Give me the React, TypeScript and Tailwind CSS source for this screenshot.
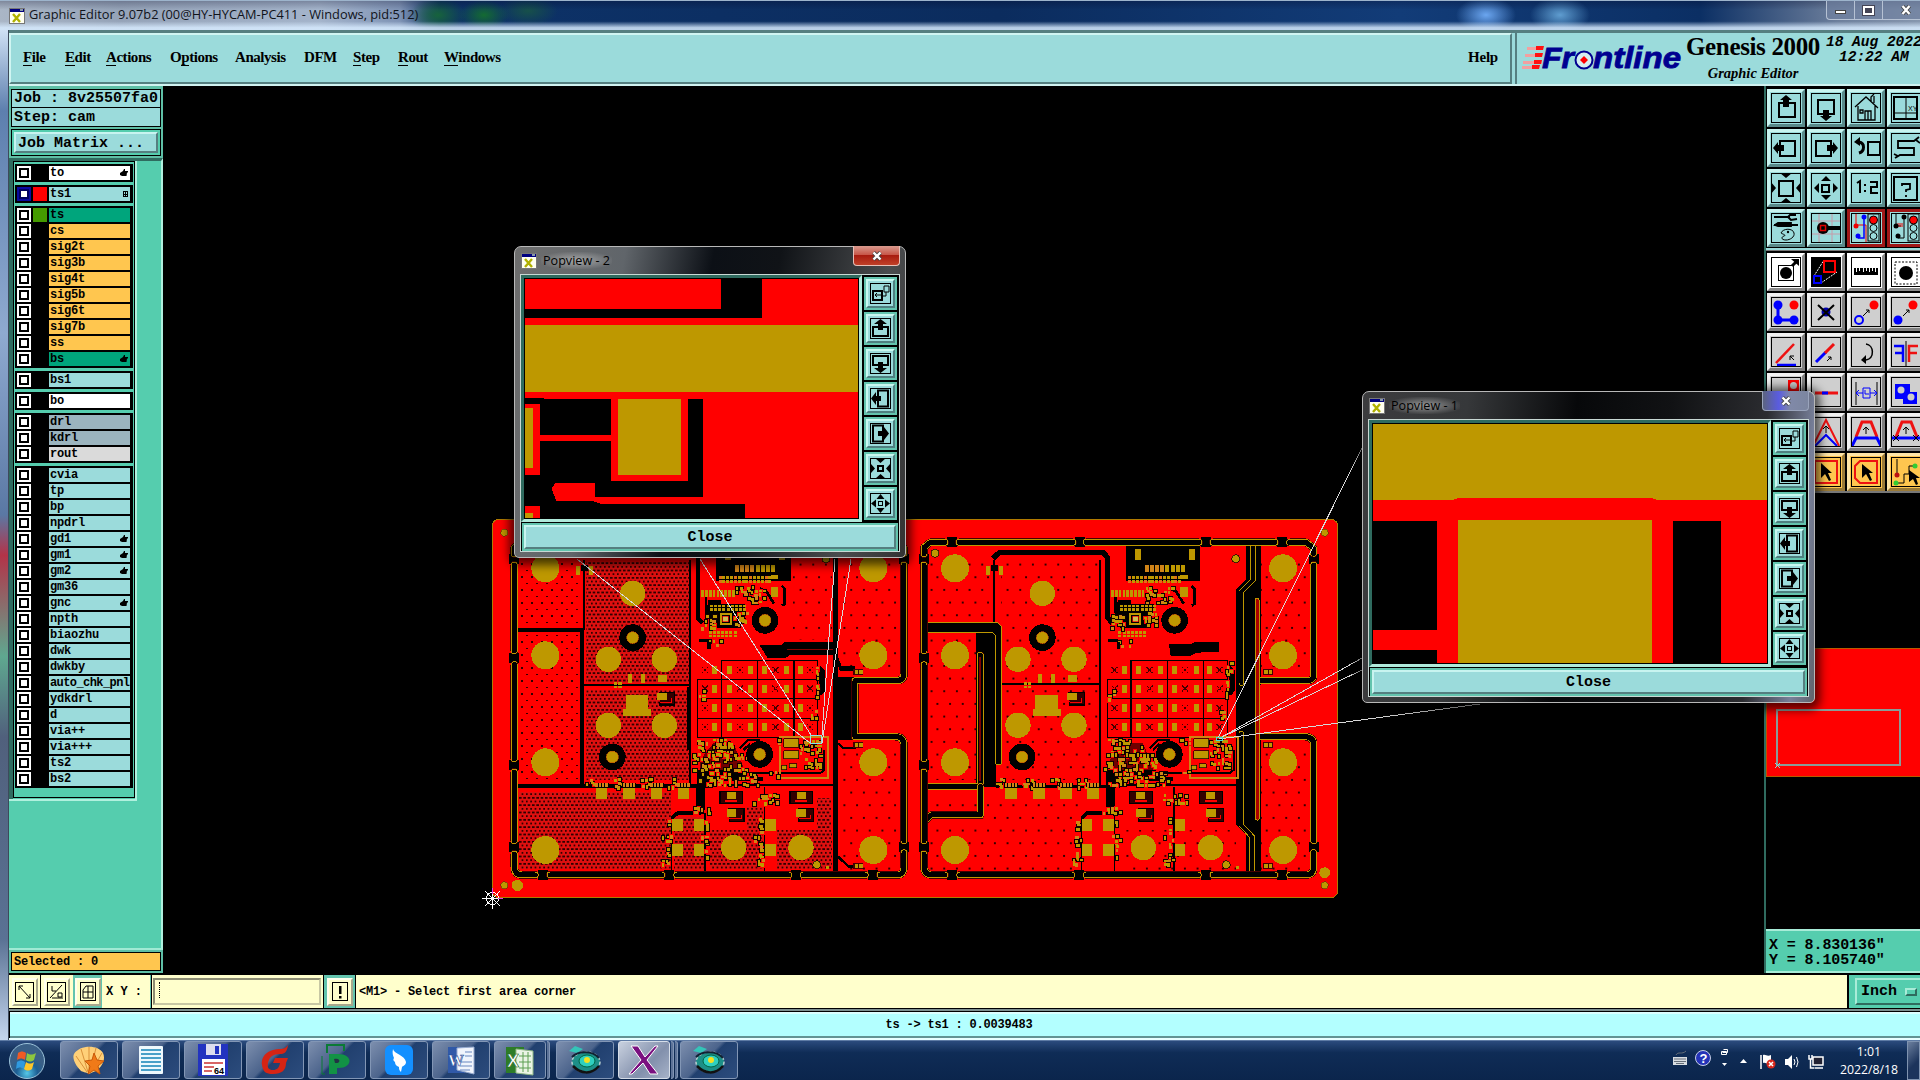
import type { ReactNode } from 'react';

const GOLD = '#be9800';
const RED = '#ff0000';

type Layer = { name: string; bg: string; mark?: 'hand' | 'grid'; color?: string; active?: boolean };

const C = 'bg-[#9bdbdb]';
const G = 'bg-[#00a57c]';
const O = 'bg-[#ffc64f]';

const layerGroups: Layer[][] = [
  [{ name: 'to', bg: 'bg-white', mark: 'hand' }],
  [{ name: 'ts1', bg: C, mark: 'grid', color: 'bg-[#ff0000]', active: true }],
  [
    { name: 'ts', bg: G, color: 'bg-[#459a00]' },
    { name: 'cs', bg: O },
    { name: 'sig2t', bg: O },
    { name: 'sig3b', bg: O },
    { name: 'sig4t', bg: O },
    { name: 'sig5b', bg: O },
    { name: 'sig6t', bg: O },
    { name: 'sig7b', bg: O },
    { name: 'ss', bg: O },
    { name: 'bs', bg: G, mark: 'hand' },
  ],
  [{ name: 'bs1', bg: C }],
  [{ name: 'bo', bg: 'bg-white' }],
  [
    { name: 'drl', bg: 'bg-[#9bb4be]' },
    { name: 'kdrl', bg: 'bg-[#9bb4be]' },
    { name: 'rout', bg: 'bg-[#dadada]' },
  ],
  [
    { name: 'cvia', bg: C },
    { name: 'tp', bg: C },
    { name: 'bp', bg: C },
    { name: 'npdrl', bg: C },
    { name: 'gd1', bg: C, mark: 'hand' },
    { name: 'gm1', bg: C, mark: 'hand' },
    { name: 'gm2', bg: C, mark: 'hand' },
    { name: 'gm36', bg: C },
    { name: 'gnc', bg: C, mark: 'hand' },
    { name: 'npth', bg: C },
    { name: 'biaozhu', bg: C },
    { name: 'dwk', bg: C },
    { name: 'dwkby', bg: C },
    { name: 'auto_chk_pnl', bg: C },
    { name: 'ydkdrl', bg: C },
    { name: 'd', bg: C },
    { name: 'via++', bg: C },
    { name: 'via+++', bg: C },
    { name: 'ts2', bg: C },
    { name: 'bs2', bg: C },
  ],
];

const menus = [
  { text: 'File', key: 0, w: 'w-[42px]' },
  { text: 'Edit', key: 0, w: 'w-[41px]' },
  { text: 'Actions', key: 0, w: 'w-[64px]' },
  { text: 'Options', key: 1, w: 'w-[65px]' },
  { text: 'Analysis', key: -1, w: 'w-[69px]' },
  { text: 'DFM', key: -1, w: 'w-[49px]' },
  { text: 'Step', key: 0, w: 'w-[45px]' },
  { text: 'Rout', key: 0, w: 'w-[46px]' },
  { text: 'Windows', key: 0, w: 'w-[70px]' },
];

const MONO = "font-['Liberation_Mono','DejaVu_Sans_Mono',monospace] font-bold";
const SERIF = "font-['Liberation_Serif',serif] font-bold";
const UI = "font-['Open_Sans','Noto_Sans',sans-serif]";

const TEAL_BEVEL = 'border-2 border-t-[#c8f4f0] border-l-[#c8f4f0] border-b-[#557f80] border-r-[#557f80]';

function XIcon() {
  return (
    <svg width="16" height="16" viewBox="0 0 16 16" shapeRendering="crispEdges">
      <rect x="0.5" y="0.5" width="15" height="15" fill="#fffff0" stroke="#777" />
      <rect x="1" y="1" width="14" height="3" fill="#000080" />
      <rect x="11" y="1" width="3" height="2" fill="#8899aa" />
      <path d="M4 6l7 8M11 6l-7 8" stroke="#b0b000" strokeWidth="2.4" shapeRendering="auto" />
    </svg>
  );
}

function Hand() {
  return (
    <svg width="8" height="8" viewBox="0 0 8 8" className="mr-[2px]">
      <path d="M0 4l3-2 1-2h1v2h3v1.500H7L6.500 7H2L0 6z" fill="#000" />
    </svg>
  );
}

function GridMark() {
  return (
    <svg width="5" height="6" viewBox="0 0 5 6" className="mr-[2px]" shapeRendering="crispEdges">
      <path d="M0.500 0.500h4v5h-4zM2.500 0v6M0 3h5" fill="none" stroke="#000" strokeWidth="1" />
    </svg>
  );
}

function LayerRow({ layer }: { layer: Layer }) {
  const tracking = layer.name.length > 11 ? 'tracking-[-0.58px]' : 'tracking-[-0.2px]';
  return (
    <div className="flex h-[14px] gap-[2px]">
      <div className={`flex h-[14px] w-[14px] items-center justify-center ${layer.active ? 'bg-[#0a0aa0]' : 'bg-white'}`}>
        <div className={`h-[10px] w-[10px] border-2 bg-white ${layer.active ? 'border-[#000060]' : 'border-black'}`} />
      </div>
      <div className={`h-[14px] w-[14px] ${layer.color ?? 'bg-black'}`} />
      <div className={`flex h-[14px] w-[81px] items-center justify-between pl-px ${layer.bg}`}>
        <span className={`${MONO} ${tracking} pt-px text-[12px] leading-[13px] whitespace-nowrap`}>{layer.name}</span>
        {layer.mark === 'hand' && <Hand />}
        {layer.mark === 'grid' && <GridMark />}
      </div>
    </div>
  );
}

function Sidebar() {
  return (
    <div className="flex h-[887px] w-[154px] shrink-0 flex-col bg-[#55cdae]">
      <div className="flex h-[72px] flex-col bg-[#5fbfa6] px-[2px] pt-[3px]">
        <div className={`${MONO} h-[19px] border border-black bg-[#9bdbdb] pl-[2px] text-[15px] leading-[18px] whitespace-nowrap`}>Job : 8v25507fa0</div>
        <div className={`${MONO} -mt-px h-[20px] border border-black bg-[#9bdbdb] pl-[2px] text-[15px] leading-[20px]`}>Step: cam</div>
        <div className="mt-[2px] h-[27px] border border-black bg-[#55cdae] p-[2px]">
          <div className={`${MONO} ${TEAL_BEVEL} h-[21px] bg-[#9bdbdb] pl-[2px] text-[15px] leading-[19px]`}>Job Matrix ...</div>
        </div>
      </div>
      <div className="h-[792px] border-t-[3px] border-r-2 border-b-2 border-t-[#2f6b5f] border-r-[#b0f0de] border-b-[#a0ead4]">
        <div className="flex h-[640px] w-[128px] border-r-2 border-b-2 border-[#b0f0de]">
          <div className="h-[638px] w-[4px] bg-[#2f6b5f]" />
          <div className="flex h-[637px] w-[122px] flex-col gap-[3px] border border-black bg-[#55cdae] px-px pt-[2px]">
            {layerGroups.map((group, i) => (
              <div key={i} className="flex flex-col gap-[2px] border-2 border-black bg-black">
                {group.map((layer) => (
                  <LayerRow key={layer.name} layer={layer} />
                ))}
              </div>
            ))}
          </div>
        </div>
      </div>
      <div className="flex h-[23px] flex-col bg-[#5fbfa6] px-[2px] pt-[2px]">
        <div className={`${MONO} h-[19px] border border-black bg-[#ffc64f] pl-[2px] text-[12px] leading-[18px] tracking-[-0.2px]`}>Selected : 0</div>
      </div>
    </div>
  );
}

/* ---------- toolbar glyphs, all on a 30x30 grid ---------- */

const box = (x: number, y: number, w: number, h: number, sw = 2, c = '#000') => (
  <rect x={x} y={y} width={w} height={h} fill="none" stroke={c} strokeWidth={sw} />
);

const glyphs: Record<string, ReactNode> = {
  up: <>{box(8, 10, 16, 14)}<path d="M12 14V7H9l6-5 6 5h-3v7z" /></>,
  down: <>{box(7, 7, 16, 14)}<path d="M12 17v6H9l6 5 6-5h-3v-6z" /></>,
  home: <><path d="M4 14L15 4l12 11M7 13v14h17V13M20 8V4l3-3M23 10V3M14 27v-9h6v9M9 17h3v3H9zM17 18v9" fill="none" stroke="#000" strokeWidth="1.300" /></>,
  xy: <>{box(3, 4, 23, 22)}<path d="M15 4v22M3 20h23" stroke="#000" fill="none" /><text x="17" y="18" fontSize="7" fontFamily="Liberation Sans">XY</text></>,
  left: <>{box(9, 8, 15, 15)}<path d="M13 12H7V9l-5 6 5 6v-3h6z" /></>,
  right: <>{box(5, 8, 15, 15)}<path d="M16 12h6V9l5 6-5 6v-3h-6z" /></>,
  undo: <>{box(17, 9, 12, 13)}<path d="M8 9c6 1 6 9 0 11" fill="none" stroke="#000" strokeWidth="3" /><path d="M9 4v9L3 9z" /></>,
  serp: <path d="M4 25l5-3h14v-7H7V8h16l5-4M3 21l4 2M25 7l4 3" fill="none" stroke="#000" strokeWidth="1.800" />,
  zin: <>{box(8, 8, 14, 15)}<path d="M9 0h12l-6 5zM9 30h12l-6-5zM0 9l5 6-5 6zM30 9l-5 6 5 6z" /></>,
  zout: <>{box(11, 12, 7, 7)}<path d="M15 3l5 5H10zM15 27l5-5H10zM3 15l5-5v10zM27 15l-5-5v10z" /></>,
  ratio: <path d="M6 10l3-2v12M14 11v2M14 17v2M19 9h7v5h-6v6h7" fill="none" stroke="#000" strokeWidth="2" />,
  help: <>{box(3, 4, 23, 23)}<path d="M11 13v-2h8v5l-4 1v2M15 22v2" fill="none" stroke="#000" strokeWidth="1.800" /></>,
  tools: <><path d="M3 4h16M3 12h24M4 12l3-2h13v3H7z" fill="none" stroke="#000" strokeWidth="1.800" /><path d="M25 2l-6 0-2 2 3 3 6-1" fill="none" stroke="#000" strokeWidth="2" /><path d="M10 20c2-5 12-5 13 0 1 4-4 7-8 7-5 0-5-3-2-4s-2-2-3-3z" fill="none" stroke="#000" /><circle cx="17" cy="19" r="1.200" /></>,
  probe: <><path d="M0 8h30M0 21h30M8 0v30M21 0v30" stroke="#c79aa8" /><circle cx="12" cy="15" r="6" /><path d="M14 15h15" stroke="#000" strokeWidth="4" />{box(9.500, 12.500, 5, 5, 1.500, '#d00')}</>,
  net1: <><path d="M5 0v12h10v17" stroke="#e00" fill="none" /><path d="M13 4v21H7" stroke="#00f" fill="none" strokeWidth="1.500" /><circle cx="5" cy="13" r="2.500" fill="#e00" /><circle cx="13" cy="4" r="2.500" fill="#00f" /><circle cx="7" cy="23" r="2.500" fill="#00f" />{box(17, 1, 11, 27, 1)}<circle cx="22.500" cy="7" r="4" fill="#f00" stroke="#000" /><circle cx="22.500" cy="15" r="3.500" fill="none" stroke="#000" /><circle cx="22.500" cy="23" r="3.500" fill="none" stroke="#000" /></>,
  net2: <><path d="M5 0v13M13 4v21H7M5 13h5" stroke="#000" fill="none" /><path d="M7 10v4M9 10v4M11 10v4" stroke="#e00" /><circle cx="5" cy="13" r="2.500" /><circle cx="13" cy="4" r="2.500" /><circle cx="7" cy="23" r="2.500" />{box(17, 1, 11, 27, 1)}<circle cx="22.500" cy="7" r="4" fill="#f00" stroke="#000" /><circle cx="22.500" cy="15" r="3.500" fill="none" stroke="#000" /><circle cx="22.500" cy="23" r="3.500" fill="none" stroke="#000" /></>,
  featMove: <>{box(7.500, 8.500, 15, 15, 1)}<circle cx="15" cy="16" r="6" /><path d="M21 9l4-4" stroke="#000" strokeWidth="3" /><path d="M20 2h8v7z" /></>,
  area: <><rect width="30" height="30" /><path d="M3 19L13 3M10 26l16-11" stroke="#fff" strokeDasharray="2 1" />{box(13, 4, 11, 11, 2, '#f00')}{box(3, 19, 7, 7, 2, '#00f')}</>,
  ruler: <path d="M3 18h24v-7h-2v4h-1v-4h-2v3h-1v-3h-2v4h-1v-4h-2v3h-1v-3h-2v4h-1v-4H9v3H8v-3H6v4H5v-4H3z" />,
  selBox: <><rect x="4" y="5" width="22" height="22" fill="none" stroke="#000" strokeDasharray="2 1.500" /><circle cx="15" cy="16" r="7" /></>,
  nodes: <><path d="M7 8v15h16" stroke="#00f" fill="none" strokeWidth="3" /><circle cx="7" cy="8" r="4.500" fill="#00f" /><circle cx="7" cy="23" r="4.500" fill="#00f" /><circle cx="23" cy="23" r="4.500" fill="#00f" /><circle cx="23" cy="8" r="4.500" fill="#f00" /></>,
  del: <><circle cx="15" cy="15" r="4.500" fill="#00a" /><path d="M7 8l16 15M23 8L7 23" stroke="#000" strokeWidth="2" /></>,
  copy: <><circle cx="8" cy="23" r="4" fill="none" stroke="#00f" strokeWidth="2" /><circle cx="23" cy="8" r="4.500" fill="#f00" /><path d="M12 19l6-6M15 13h3v3" stroke="#000" fill="none" /></>,
  move: <><circle cx="7" cy="23" r="4.500" fill="#00f" /><circle cx="22" cy="8" r="4.500" fill="#f00" /><path d="M12 19l6-6M15 13h3v3" stroke="#000" fill="none" /></>,
  rotate: <><path d="M5 26L23 7" stroke="#e11" strokeWidth="2.500" /><path d="M6 28h19" stroke="#00f" strokeWidth="2.500" /><path d="M23 23l-4-4M19 23v-4h4" stroke="#000" fill="none" /></>,
  scale: <><path d="M5 25l10-10" stroke="#00f" strokeWidth="3" /><path d="M14 16l9-9" stroke="#e11" strokeWidth="3" /><path d="M16 24l4-4M17 20h3v3" stroke="#000" fill="none" /></>,
  arc: <><path d="M15 7c8 1 9 14 0 16" fill="none" stroke="#000" strokeWidth="1.500" /><path d="M15 18l-5 5 5 4z" /></>,
  mirror: <><path d="M3 9h9v16M4 16h8" stroke="#00f" fill="none" strokeWidth="2.500" /><path d="M27 9h-9v16M26 16h-8" stroke="#e11" fill="none" strokeWidth="2.500" /><path d="M15 4v25" stroke="#000" /></>,
  pad: <><rect x="17" y="3" width="11" height="11" fill="#f00" /><circle cx="22.500" cy="8.500" r="3.500" fill="#ccc" /></>,
  seg: <><path d="M4 16h23" stroke="#e11" strokeWidth="3" /><path d="M11 16h6" stroke="#00f" strokeWidth="3" /></>,
  dist: <><path d="M5 5v23M26 5v23" stroke="#000" /><path d="M6 16h6M19 16h6M8 13l-3 3 3 3M23 13l3 3-3 3M12 11h7v10h-7zM14 13v4h4" stroke="#00f" fill="none" /></>,
  pads: <><rect x="4" y="7" width="15" height="15" fill="#00f" /><rect x="12" y="15" width="14" height="12" fill="#00f" /><circle cx="10" cy="13" r="3.500" fill="#ccc" /><circle cx="20" cy="20" r="3.500" fill="#ccc" /></>,
  peak1: <><path d="M2 29L15 3l13 26" stroke="#e11" fill="none" strokeWidth="2" /><path d="M4 29l11-11 11 11" stroke="#00f" fill="none" strokeWidth="2" /><path d="M15 16v-6M12 12l3-3 3 3" stroke="#000" fill="none" /></>,
  peak2: <><path d="M5 20L11 5h9l6 15" stroke="#e11" fill="none" strokeWidth="3" /><path d="M1 29l4-8h21l4 8" stroke="#00f" fill="none" strokeWidth="3" /><path d="M15 17v-6M12 13l3-3 3 3" stroke="#000" fill="none" /></>,
  peak3: <><path d="M5 20L11 5h9l6 15" stroke="#e11" fill="none" strokeWidth="3" /><path d="M1 21h29" stroke="#00f" strokeWidth="3" /><path d="M15 17v-6M12 13l3-3 3 3M2 18l6 6M8 18l-6 6M22 18l6 6M28 18l-6 6" stroke="#000" fill="none" /></>,
  sel1: <>{box(4, 4, 22, 22, 2, '#e11')}<path d="M10 6v15l4-4 4 7 2-1-3-7h4z" /></>,
  sel2: <><path d="M9 4h17v22H9l-5-5V9z" stroke="#e11" fill="none" strokeWidth="2" /><path d="M11 7v14l4-4 4 7 2-1-3-7h4z" /></>,
  sel3: <><path d="M6 2v16M5 26h8v-9h5V9h6" stroke="#000" fill="none" /><circle cx="6" cy="18" r="2.500" fill="#b11" /><circle cx="5" cy="26" r="2.500" fill="#3c3" /><circle cx="24" cy="9" r="2.500" fill="#3c3" /><path d="M18 13v12l4-3 3 6 2-1-2-6h4z" /></>,
};

const VIEW_TOOLS = ['up', 'down', 'home', 'xy', 'left', 'right', 'undo', 'serp', 'zin', 'zout', 'ratio', 'help', 'tools', 'probe', 'net1', 'net2'];
const EDIT_TOOLS = [
  'featMove', 'area', 'ruler', 'selBox',
  'nodes', 'del', 'copy', 'move',
  'rotate', 'scale', 'arc', 'mirror',
  'pad', 'seg', 'dist', 'pads',
  'sel1', 'peak1', 'peak2', 'peak3',
  'sel1', 'sel1', 'sel2', 'sel3',
];

function toolTone(name: string, index: number, edit: boolean) {
  if (!edit) {
    return name.startsWith('net')
      ? 'bg-[#9bdbdb] border-[#a01818]'
      : 'bg-[#9bdbdb] border-t-[#c8f4f0] border-l-[#c8f4f0] border-b-[#5a8a8a] border-r-[#5a8a8a]';
  }
  if (index < 4) return 'bg-white border-t-white border-l-white border-b-[#8a8a8a] border-r-[#8a8a8a]';
  if (index >= 20) return 'bg-[#ffc64f] border-t-[#ffe6a8] border-l-[#ffe6a8] border-b-[#9a7a38] border-r-[#9a7a38]';
  return 'bg-[#cfcfcf] border-t-[#f2f2f2] border-l-[#f2f2f2] border-b-[#808080] border-r-[#808080]';
}

function ToolButton({ name, index, edit }: { name: string; index: number; edit: boolean }) {
  return (
    <div className={`flex h-[38px] w-[38px] items-center justify-center border-[3px] ${toolTone(name, index, edit)}`}>
      <div className="h-[30px] w-[30px] border border-black">
        <svg width="28" height="28" viewBox="1 1 28 28">{glyphs[name]}</svg>
      </div>
    </div>
  );
}

function RightPanel() {
  return (
    <div className="flex h-[887px] w-[156px] shrink-0 flex-col border-l-2 border-[#2f6b5f] bg-black">
      <div className="grid h-[164px] grid-cols-[repeat(4,38px)] content-start gap-[2px] border-b-2 border-[#9bdbdb] pt-[3px] pl-px">
        {VIEW_TOOLS.map((name, i) => (
          <ToolButton key={i} name={name} index={i} edit={false} />
        ))}
      </div>
      <div className="grid h-[243px] grid-cols-[repeat(4,38px)] content-start gap-[2px] border-t border-b-2 border-[#777] pt-[2px] pl-px">
        {EDIT_TOOLS.map((name, i) => (
          <ToolButton key={i} name={name} index={i} edit />
        ))}
      </div>
      <svg width="154" height="436" viewBox="0 0 154 436" shapeRendering="crispEdges">
        <rect x="0.5" y="155.500" width="160" height="128" fill={RED} stroke="#b85a00" />
        <rect x="11" y="217" width="123" height="55" fill="none" stroke="#8a9c98" strokeWidth="2" />
        <path d="M9 270l5 5M14 270l-5 5" stroke="#8fd6d0" />
      </svg>
      <div className={`${MONO} h-[44px] border-t-2 border-b-2 border-[#a8ecd8] bg-[#55cdae] pt-[7px] pl-[3px] text-[15px] leading-[15px] tracking-[-0.1px] whitespace-pre`}>
        <div>X = 8.830136"</div>
        <div>Y = 8.105740"</div>
      </div>
    </div>
  );
}

/* ---------- board artwork ---------- */

// Deterministic scatter of small pads, one per grid cell at most.
function scatter(seed: number, x: number, y: number, w: number, h: number, n: number) {
  let s = seed;
  const next = () => {
    s = (s * 16807) % 2147483647;
    return s / 2147483647;
  };
  next();
  next();
  const used = new Set<string>();
  const pads: { x: number; y: number; w: number; h: number }[] = [];
  for (let i = 0; i < n; i++) {
    const cx = Math.floor((next() * w) / 11);
    const cy = Math.floor((next() * h) / 11);
    const wide = next() > 0.5;
    const shift = next() > 0.5 ? 3 : 0;
    if (used.has(`${cx},${cy}`)) continue;
    used.add(`${cx},${cy}`);
    pads.push({ x: x + cx * 11 + shift, y: y + cy * 11 + 3 - shift, w: wide ? 10 : 7, h: wide ? 8 : 10 });
  }
  return pads;
}

function Cluster({ seed, x, y, w, h, n }: { seed: number; x: number; y: number; w: number; h: number; n: number }) {
  const pads = scatter(seed, x, y, w, h, n);
  return (
    <g>
      {pads.map((p, i) => (
        <rect key={i} x={p.x - 3} y={p.y - 3} width={p.w + 6} height={p.h + 6} fill={i % 3 ? '#100' : RED} />
      ))}
      {pads.map((p, i) => (
        <rect key={i} x={p.x} y={p.y} width={p.w} height={p.h} fill={i % 5 ? GOLD : '#d08418'} />
      ))}
    </g>
  );
}

const BIG = [[196, 175], [196, 436], [196, 757], [196, 1020], [1180, 175], [1180, 436], [1180, 757], [1180, 1020]];
const MID = [[458, 250], [385, 448], [553, 448], [385, 646], [553, 646], [761, 1013], [963, 1013]];
const RINGS = [[458, 383], [397, 741], [855, 331], [839, 733]];

function Slot({ d }: { d: string }) {
  return (
    <g fill="none" strokeLinecap="round" strokeLinejoin="round">
      <path d={d} stroke="#400" strokeWidth="23" />
      <path d={d} stroke={GOLD} strokeWidth="20" />
      <path d={d} stroke="#000" strokeWidth="15" />
    </g>
  );
}

const OUTLINE = [
  'M103 165V422', 'M103 464V746', 'M103 786V992',
  'M103 1032V1070Q103 1095 128 1095H166',
  'M210 1095H546', 'M590 1095H926', 'M970 1095H1156',
  'M1200 1095H1250Q1272 1095 1272 1070V1028',
  'M103 132V112L122 97H166', 'M208 97H550', 'M590 97H928', 'M970 97H1156', 'M1200 97H1250L1272 115V130',
];

const TABS = [[103, 147], [103, 443], [103, 766], [103, 1012], [188, 1095], [568, 1095], [948, 1095], [1178, 1095], [1272, 1010], [188, 97], [570, 97], [949, 97], [1178, 97], [1272, 148]];

function Parts({ seed }: { seed: number }) {
  const rows = [480, 536, 594, 651];
  return (
    <g>
      {/* connector */}
      <rect x="708" y="108" width="224" height="104" />
      <path d="M735 118h18v32h-18zM897 118h18v32h-18z" fill={GOLD} />
      {Array.from({ length: 8 }, (_, i) => (
        <rect key={i} x={765 + i * 15.500} y="165" width="12" height="21" fill={i > 3 ? GOLD : '#d08418'} />
      ))}
      {Array.from({ length: 14 }, (_, i) => (
        <path key={i} d={`M${716 + i * 11.500} 198h9v9h-9zM${716 + i * 11.500} 210h9v8h-9z`} fill={i % 4 ? GOLD : '#e07018'} />
      ))}
      <path d="M840 235l20 10 22 36 M906 228l8 8v46l-8 5 M678 262v46l30 20h50" fill="none" stroke="#000" strokeWidth="8" />
      <path d="M684 270h40v12h70v22h-10v50H690v-40h-10z" />
      {Array.from({ length: 9 }, (_, i) => (
        <path key={i} d={`M${664 + i * 11.500} 241h8v20h-8zM${690 + i * 12.500} 285h9v7h-9zM${690 + i * 12.500} 295h9v7h-9z`} fill={GOLD} />
      ))}
      {Array.from({ length: 7 }, (_, i) => (
        <path key={i} d={`M${686 + i * 12.500} 363h9v8h-9zM${686 + i * 12.500} 374h9v8h-9z`} fill={GOLD} />
      ))}
      <Cluster seed={seed + 1} x={768} y={228} w={88} h={55} n={30} />
      <Cluster seed={seed + 2} x={664} y={316} w={44} h={44} n={20} />
      <Cluster seed={seed + 3} x={762} y={306} w={44} h={44} n={18} />
      <Cluster seed={seed + 4} x={684} y={390} w={44} h={22} n={8} />
      <path d="M872 196h22v12h-22zM872 232h22v28h-22z" fill={GOLD} />
      <path d="M656 388h30v8h-30zM682 396h10v20h-10z" />
      <rect x="719" y="309" width="36" height="36" fill={GOLD} />
      <rect x="725" y="315" width="24" height="24" fill="#000" />
      <rect x="729" y="319" width="16" height="16" fill="#d0c050" stroke={RED} strokeWidth="2" />

      {/* capacitor bank */}
      <path d="M724 451H1013V682H653V508H1013M653 566H1013M653 625H1013M724 451V682M833 451V682M942 451V682" fill="none" stroke="#000" strokeWidth="4" />
      {rows.map((y) => (
        <g key={y}>
          {[704, 747, 811, 853, 919, 960].map((x) => (
            <rect key={x} x={x - 7} y={y - 12} width="15" height="25" fill={GOLD} />
          ))}
          {[675, 780, 886, 990].map((x) => (
            <path key={x} d={`M${x - 9} ${y - 9}l18 18M${x + 9} ${y - 9}l-18 18`} stroke="#400" strokeWidth="4" strokeDasharray="5 2" />
          ))}
        </g>
      ))}
      <path d="M1020 466l16 16v60l-12 14h-8v-30z" />
      <Cluster seed={seed + 5} x={1008} y={456} w={12} h={110} n={14} />
      <Cluster seed={seed + 6} x={656} y={540} w={22} h={33} n={5} />
      <Cluster seed={seed + 7} x={990} y={600} w={22} h={33} n={5} />

      {/* dense logic area under the bank */}
      <path d="M700 700h60l30 70v40H660v-60z" fill="#700000" />
      <path d="M650 780h150v20h50v14H690v20h-40z" />
      <path d="M780 715l24-24h36M790 720l20-18" fill="none" stroke="#000" strokeWidth="7" />
      <Cluster seed={seed + 8} x={652} y={686} w={110} h={55} n={44} />
      <Cluster seed={seed + 17} x={640} y={730} w={160} h={55} n={68} />
      <Cluster seed={seed + 9} x={655} y={786} w={187} h={44} n={60} />
      <path d="M820 790h200l12-10v-60" fill="none" stroke="#000" strokeWidth="6" />
      <rect x="900" y="681" width="145" height="123" fill="none" stroke="#cf8410" strokeWidth="6" />
      <path d="M912 686h45v26h-45zM912 722h45v24h-45zM905 766h16v14h-16zM928 762h22v12h-22z" fill={GOLD} stroke="#000" strokeWidth="2" />
      <Cluster seed={seed + 10} x={960} y={690} w={66} h={88} n={42} />
      <Cluster seed={seed + 11} x={872} y={684} w={33} h={22} n={5} />
      <Cluster seed={seed + 12} x={870} y={782} w={33} h={12} n={4} />

      {/* driver row */}
      <path d="M320 825h340v8H320z" />
      {[364, 447, 529, 610].map((x, i) => (
        <g key={x}>
          <Cluster seed={seed + 20 + i} x={x - 46} y={804} w={33} h={33} n={9} />
          <rect x={x - 20} y="818" width="42" height="14" />
          <path d={`M${x - 18} 820h7v10h-7zM${x - 8} 820h7v10h-7zM${x + 2} 820h7v10h-7zM${x + 12} 820h7v10h-7z`} fill="#d08418" />
          <rect x={x - 17} y="835" width="35" height="33" fill={GOLD} />
        </g>
      ))}

      {/* lower right blocks */}
      <rect x="648" y="830" width="28" height="70" />
      <path d="M575 1082V925l18-15h82v172M853 830v252" fill="none" stroke="#000" strokeWidth="4" />
      <path d="M575 925l18-16h70" fill="none" stroke="#000" strokeWidth="11" />
      {[[592, 945], [657, 945], [592, 1020], [657, 1020], [871, 945], [871, 1020]].map(([x, y]) => (
        <rect key={`${x}-${y}`} x={x - 16} y={y - 17} width="32" height="34" fill={GOLD} />
      ))}
      <Cluster seed={seed + 30} x={640} y={892} w={55} h={22} n={10} />
      {[[564, 940], [564, 1010], [680, 940], [680, 1005], [842, 930], [842, 1005]].map(([x, y], i) => (
        <Cluster key={i} seed={seed + 31 + i} x={x - 4} y={y - 10} w={11} h={55} n={7} />
      ))}
      <Cluster seed={seed + 40} x={546} y={976} w={33} h={22} n={5} />
      <Cluster seed={seed + 41} x={546} y={1046} w={33} h={22} n={5} />
      <Cluster seed={seed + 42} x={664} y={976} w={33} h={22} n={5} />
      <Cluster seed={seed + 43} x={822} y={976} w={33} h={22} n={6} />
      <Cluster seed={seed + 44} x={822} y={1046} w={33} h={22} n={6} />
      <Cluster seed={seed + 45} x={820} y={852} w={77} h={33} n={20} />
      {[[720, 845], [930, 845]].map(([x, y]) => (
        <g key={x}>
          <path d={`M${x} ${y}h68v36h-68z`} fill="#300" stroke="#000" strokeWidth="4" />
          <rect x={x + 20} y={y + 2} width="27" height="20" fill={GOLD} />
          <rect x={x + 16} y={y + 26} width="36" height="6" fill={RED} />
        </g>
      ))}
      {[[532, 547], [740, 896], [949, 896]].map(([x, y]) => (
        <g key={x}>
          <path d={`M${x + 4} ${y}h48v38h-44v-10`} fill="#300" stroke="#000" strokeWidth="4" />
          <path d={`M${x + 8} ${y + 30}h36v-12`} fill="none" stroke={RED} strokeWidth="3" />
          <rect x={x} y={y + 2} width="29" height="22" fill={GOLD} />
        </g>
      ))}

      {/* relay pads */}
      <path d="M437 555h67v43h9v20h-84v-20h8zM444 492h12v26h-12zM483 492h12v26h-12zM534 495h27v21h-27z" fill={GOLD} />
      <path d="M402 516h10v8h-10zM415 516h10v8h-10zM402 527h10v8h-10zM415 527h10v8h-10zM288 168h13v26h-13zM327 168h13v26h-13z" fill={GOLD} />
      <rect x="304" y="164" width="20" height="18" />

      {BIG.map(([x, y]) => (
        <circle key={`${x}-${y}`} cx={x} cy={y} r="42" fill={GOLD} />
      ))}
      {MID.map(([x, y]) => (
        <circle key={`${x}-${y}`} cx={x} cy={y} r="38" fill={GOLD} />
      ))}
      {RINGS.map(([x, y]) => (
        <g key={`${x}-${y}`}>
          <circle cx={x} cy={y} r="40" fill="#000" />
          <circle cx={x} cy={y} r="18" fill={GOLD} stroke="#c05000" strokeWidth="2" />
        </g>
      ))}
      {[[1010, 1064], [1038, 146], [136, 130]].map(([x, y]) => (
        <circle key={x} cx={x} cy={y} r="12" fill={GOLD} stroke="#000" strokeWidth="2" />
      ))}
      <path d="M1120 478h30v16h-30zM1120 697h30v16h-30zM1120 1060h30v16h-30z" fill="#400" />
      <path d="M1124 480h10v12h-10zM1138 480h10v12h-10zM1124 699h10v12h-10zM1138 699h10v12h-10zM1124 1062h10v12h-10zM1138 1062h10v12h-10zM1038 1068h10v9h-10z" fill={GOLD} />
    </g>
  );
}

function Frame() {
  return (
    <g>
      {TABS.map(([x, y]) => (
        <rect key={`${x}-${y}`} x={x - 15} y={y - 15} width="30" height="30" />
      ))}
      {OUTLINE.map((d) => (
        <Slot key={d} d={d} />
      ))}
    </g>
  );
}

function LeftUnit() {
  return (
    <g transform="translate(480 510) scale(0.33333)">
      <path d="M118 150h180v200H118zM118 372h180v450H118z" fill="url(#mid)" />
      <path d="M318 155h308v365H318zM318 540h308v270H318z" fill="url(#dense)" />
      <path d="M118 845h455v232H118zM583 920h88v160h-88zM800 890h50v190h-50zM690 960h160v118H690zM890 960h166v118H890zM1010 865h44v100h-44z" fill="url(#dense)" />
      <path d="M1090 130h160v350h-160zM1090 700h160v380h-160zM940 150h116v240H940z" fill="url(#sparse)" />
      <path d="M113 361H313M307 361V830M113 829H650" fill="none" stroke="#000" strokeWidth="13" />
      <path d="M312 150V361M313 524H630M630 150V830M640 825H1060" fill="none" stroke="#000" strokeWidth="6" />
      <path d="M653 110V325l15 15" fill="none" stroke="#000" strokeWidth="12" />
      <path d="M627 530V720" stroke="#000" strokeWidth="9" />
      <path d="M838 405h66l10-8h150v14l20 56h40v16h-44l-20-48H930l-14 10h-52z" />
      <path d="M920 418H1060" stroke="#c00" strokeWidth="2" />
      <path d="M1060 140h14v945h-14zM1070 500h56v190h-56z" />
      <path d="M1074 700l14 14h40M1074 1040l32 30h20" fill="none" stroke="#000" strokeWidth="7" />
      <Frame />
      <Slot d="M1272 165V490Q1272 512 1250 512H1125V680H1245Q1272 680 1272 705V992" />
      <path d="M1137 524h160v144h-160z" fill={RED} />
      <Parts seed={137} />
      <circle cx="73" cy="68" r="11" fill={GOLD} stroke="#630" strokeWidth="2" />
      <circle cx="73" cy="1126" r="11" fill={GOLD} stroke="#630" strokeWidth="2" />
      <circle cx="112" cy="1126" r="17" fill={GOLD} />
    </g>
  );
}

function RightUnit() {
  return (
    <g transform="translate(889.670 510) scale(0.33333)">
      <path d="M118 150h180v180H118zM118 380h140v430H118zM335 150h290v365H335zM335 540h290v270H335zM118 880h450v200H118zM700 960h340v120H700z" fill="url(#sparse)" />
      <path d="M1115 130h135v355h-135zM1115 700h135v380h-135z" fill="url(#sparse)" />
      <path d="M310 145l20-18h310l14 16v180l20 22" fill="none" stroke="#000" strokeWidth="16" />
      <path d="M313 150V335M335 523H630M630 150V830M650 825H1040" fill="none" stroke="#000" strokeWidth="5" />
      <path d="M258 370h60v462h-60z" />
      <path d="M108 338h216l11 10v415h-17V376l-8-8H108z" stroke={GOLD} strokeWidth="3" />
      <path d="M258 371h48v300h-48z" />
      <path d="M838 403h66l10-7h75v30l-70 2-16 10h-60z" />
      <path d="M1039 100h76v985h-46v-110l-30-30V240l30-32V100" />
      <Slot d="M272 436V830H110" />
      <Slot d="M272 830V915H125L103 935V985" />
      <path d="M272 440V812" stroke={RED} strokeWidth="6" strokeOpacity="0.5" />
      <path d="M1090 100V210l-35 35V520M1055 670V945l32 35V1085" fill="none" stroke={GOLD} strokeWidth="16" strokeLinecap="round" />
      <path d="M1090 100V210l-35 35V520M1055 670V945l32 35V1085" fill="none" stroke="#000" strokeWidth="11" strokeLinecap="round" />
      <Frame />
      <Slot d="M1272 165V495Q1272 512 1250 512H1112" />
      <Slot d="M1112 680H1245Q1272 680 1272 705V992" />
      <path d="M1103 270V925" stroke={GOLD} strokeWidth="14" strokeLinecap="round" />
      <path d="M1103 270V925" stroke="#a00" strokeWidth="8" strokeLinecap="round" />
      <path d="M1112 524h170v144h-170z" fill={RED} />
      <Parts seed={911} />
      <circle cx="1305" cy="68" r="11" fill={GOLD} stroke="#630" strokeWidth="2" />
      <circle cx="1305" cy="1126" r="11" fill={GOLD} stroke="#630" strokeWidth="2" />
      <circle cx="1305" cy="1088" r="16" fill={GOLD} />
    </g>
  );
}

function Board() {
  return (
    <svg width="1601" height="887" viewBox="163 86 1601 887" className="shrink-0 bg-black" shapeRendering="crispEdges">
      <defs>
        <pattern id="dense" width="13" height="22" patternUnits="userSpaceOnUse">
          <rect width="13" height="22" fill="#df1010" />
          <path d="M1 2h6v5H1zM7.500 13h6v5h-6z" fill="#300000" />
        </pattern>
        <pattern id="mid" width="30" height="39" patternUnits="userSpaceOnUse">
          <path d="M4 4h5v5H4zM19 23h5v5h-5z" fill="#300000" />
        </pattern>
        <pattern id="sparse" width="38" height="76" patternUnits="userSpaceOnUse">
          <path d="M8 8h6v6H8zM27 46h6v6h-6z" fill="#300000" />
        </pattern>
      </defs>
      <rect x="492.500" y="519.500" width="845" height="378" rx="6" fill={RED} stroke="#b07a00" />
      <LeftUnit />
      <RightUnit />
      <g fill="none" stroke="#d8d8d8" strokeWidth="1">
        <path d="M577 559L810 743M700 559L811 735M835 559L828 650L822 735M851 559L822 743" />
        <rect x="810.500" y="735.500" width="11" height="8" stroke="#8fe6e6" />
        <path d="M1218 738L1362 448M1220 738L1362 658M1220 738L1362 670M1219 739L1480 704" />
        <path d="M1216 737h6v3h-6z" stroke="#40e0d0" />
      </g>
      <g stroke="#fff" strokeWidth="1" fill="none">
        <path d="M482 898.500h21M492.500 888v21M485 891l15 15M500 891l-15 15" />
        <circle cx="492.500" cy="898.500" r="6" />
        <path d="M492 888v6M498 898h5" stroke="#e040e0" />
      </g>
    </svg>
  );
}

/* ---------- popview windows ---------- */

const popGlyphs: ReactNode[] = [
  <>{box(3, 8, 9, 9)}<path d="M14 3h5v6h-5zM12 13h4v-4M5 12h6M7 10l-2 2 2 2" fill="none" stroke="#000" /></>,
  <>{box(3, 9, 15, 9)}<path d="M8 12V6H4l6.500-5 6.500 5h-4v6z" /></>,
  <>{box(3, 3, 15, 9)}<path d="M8 9v6H4l6.500 5 6.500-5h-4V9z" /></>,
  <>{box(8, 2.500, 10, 16)}<path d="M11 8H6V4l-5 6.500L6 17v-4h5z" /></>,
  <>{box(3, 2.500, 10, 16)}<path d="M8 8h6V4l5 6.500-5 6.500v-4H8z" /></>,
  <>{box(8, 8, 5, 5)}<path d="M5 0h11l-5.500 5zM5 21h11l-5.500-5zM0 5l5 5.500L0 16zM21 5l-5 5.500 5 5.500z" /></>,
  <>{box(8.500, 8.500, 4, 4, 1)}<path d="M10.500 1l4 5h-8zM10.500 20l4-5h-8zM1 10.500l5-4v8zM20 10.500l-5-4v8z" /></>,
];

type PopviewProps = { title: string; place: string; view: string; bar: string; closeTone: string; children: ReactNode };

function Popview({ title, place, view, bar, closeTone, children }: PopviewProps) {
  return (
    <div className={`absolute flex h-[312px] flex-col rounded-t-[7px] rounded-b-[5px] border border-[#b8b8b8] px-[5px] pb-[5px] shadow-[0_2px_10px_5px_rgba(0,0,0,0.65)] ${place} ${bar}`}>
      <div className="flex h-[27px] shrink-0 items-start">
        <div className="flex grow items-center pt-[5px] pl-px">
          <XIcon />
          <span className={`${UI} ml-[4px] bg-[radial-gradient(ellipse,rgba(200,200,200,0.65),transparent_78%)] px-[2px] text-[12.600px] leading-[17px] text-black`}>{title}</span>
        </div>
        <div className={`-mt-px flex h-[20px] w-[47px] items-center justify-center rounded-b-[4px] border border-t-0 ${closeTone}`}>
          <svg width="12" height="10" viewBox="0 0 12 10"><path d="M2.500 1.500l7 7M9.500 1.500l-7 7" stroke="#444" strokeWidth="4" /><path d="M2.500 1.500l7 7M9.500 1.500l-7 7" stroke="#fff" strokeWidth="2.400" /></svg>
        </div>
      </div>
      <div className="flex grow flex-col border border-[#c8d8d4] bg-black">
        <div className="flex h-[247px] justify-between pr-[2px]">
          <div className={`h-[247px] border-[3px] border-t-[#2f6b5f] border-l-[#2f6b5f] border-b-[#b0eadb] border-r-[#b0eadb] bg-black p-px ${view}`}>
            {children}
          </div>
          <div className="flex flex-col gap-[2px] pt-[2px]">
            {popGlyphs.map((g, i) => (
              <div key={i} className="h-[33px] w-[33px] border-2 border-[#63c4ae]">
                <div className="flex h-[29px] w-[29px] items-center justify-center border-2 border-t-[#c8f8f0] border-l-[#c8f8f0] border-b-[#4f8080] border-r-[#4f8080] bg-[#9bdbdb]">
                  <div className="h-[21px] w-[21px] border border-black">
                    <svg width="19" height="19" viewBox="1 1 19 19">{g}</svg>
                  </div>
                </div>
              </div>
            ))}
          </div>
        </div>
        <div className="mx-px mt-px h-[28px] border-2 border-[#63c4ae]">
          <div className={`${MONO} ${TEAL_BEVEL} h-[24px] bg-[#9bdbdb] text-center text-[15px] leading-[21px]`}>Close</div>
        </div>
      </div>
    </div>
  );
}

/* ---------- chrome ---------- */

function TitleBar() {
  return (
    <div className="flex h-[30px] shrink-0 items-center justify-between border-t border-[#9db4cc] bg-[linear-gradient(180deg,rgba(0,0,30,0.25)_0%,transparent_30%,transparent_70%,rgba(215,235,255,0.85)_92%),radial-gradient(ellipse_28px_18px_at_438px_14px,#17633c,transparent),radial-gradient(ellipse_25px_15px_at_484px_14px,#146b32,transparent),radial-gradient(ellipse_30px_15px_at_528px_10px,#17504a,transparent),radial-gradient(ellipse_30px_18px_at_1486px_14px,#6ba6f0,transparent),radial-gradient(ellipse_30px_18px_at_1560px_14px,#5f9dd0,transparent),linear-gradient(90deg,#aab6c6_0px,#95a3b8_120px,#a4b4cb_320px,#7f93b5_400px,#0d3268_440px,#0b2c5e_1000px,#123c78_1400px,#0b2f64_1700px,#6d7f9c_1840px,#8696ae_1920px)]">
      <div className="flex items-center pl-[9px]">
        <XIcon />
        <span className={`${UI} mb-px ml-[4px] text-[12.800px] text-[#10131a]`}>Graphic Editor 9.07b2 (00@HY-HYCAM-PC411 - Windows, pid:512)</span>
      </div>
      <div className="mb-[10px] flex h-[19px] rounded-bl-[4px] border border-t-0 border-r-0 border-[#b6c2d4] bg-[#6f80a0]/70">
        <div className="flex w-[28px] items-end justify-center border-r border-[#b6c2d4] pb-[5px]"><div className="h-[4px] w-[11px] border border-[#444] bg-white" /></div>
        <div className="flex w-[28px] items-center justify-center border-r border-[#b6c2d4]"><div className="h-[9px] w-[11px] border-2 border-white bg-[#445] outline outline-[#445]" /></div>
        <div className="flex w-[37px] items-center justify-center pl-[8px]">
          <svg width="12" height="10" viewBox="0 0 12 10"><path d="M2.500 1l7 8M9.500 1l-7 8" stroke="#444" strokeWidth="4" /><path d="M2.500 1l7 8M9.500 1l-7 8" stroke="#fff" strokeWidth="2.400" /></svg>
        </div>
      </div>
    </div>
  );
}

function MenuBar() {
  return (
    <div className="flex h-[56px] shrink-0 border-t-[3px] border-b-2 border-t-[#557f80] border-b-[#d0f2f0] bg-[#9bdbdb]">
      <div className={`${SERIF} flex h-[51px] w-[1503px] shrink-0 items-center justify-between border-2 border-t-[#d0f5f2] border-l-[#d0f5f2] border-b-[#557f80] border-r-[#557f80] pb-[3px] pl-[12px] text-[15px]`}>
        <div className="flex">
          {menus.map(({ text, key, w }) => (
            <div key={text} className={`${w} leading-[16px] tracking-[-0.45px]`}>
              {key < 0 ? text : (
                <>
                  {text.slice(0, key)}
                  <span className="border-b border-black">{text[key]}</span>
                  {text.slice(key + 1)}
                </>
              )}
            </div>
          ))}
        </div>
        <div className="mr-[12px] tracking-[-0.2px]">Help</div>
      </div>
      <div className="ml-[3px] flex h-[51px] w-[405px] shrink-0 border-l-2 border-[#557f80] pl-[5px]">
        <svg width="161" height="50" viewBox="0 0 161 50" className="shrink-0">
          <path d="M5 14h15v3H5zM3 21h17v3H3zM1 28h19v3H1zM0 33h17v3H0z" fill="#f2a0a0" />
          <path d="M14 13h8l-1 4h-7zM13 20h8l-1 4h-7zM12 27h8l-1 4h-7zM10 32h8l-1 4h-7z" fill="#ff1010" />
          <text x="20" y="35" fontFamily="Liberation Sans, sans-serif" fontWeight="bold" fontStyle="italic" fontSize="29" fill="#000090" stroke="#000090" strokeWidth="0.8" textLength="32" lengthAdjust="spacingAndGlyphs">Fr</text>
          <circle cx="62" cy="27" r="8.500" fill="#d4eef0" stroke="#000090" strokeWidth="2" />
          <path d="M62 23l4 4-4 4-4-4z" fill="#f00" />
          <text x="71" y="35" fontFamily="Liberation Sans, sans-serif" fontWeight="bold" fontStyle="italic" fontSize="29" fill="#000090" stroke="#000090" strokeWidth="0.8" textLength="88" lengthAdjust="spacingAndGlyphs">ntline</text>
        </svg>
        <div className={`${SERIF} w-[140px] shrink-0 text-center`}>
          <div className="text-[25px] leading-[28px] tracking-[-0.350px] whitespace-nowrap">Genesis 2000</div>
          <div className="pt-[4px] text-[14.500px] leading-[16px] italic">Graphic Editor</div>
        </div>
        <div className={`${MONO} ml-[3px] w-[100px] shrink-0 pt-[2px] text-[14.500px] leading-[15px] whitespace-pre italic`}>
          <div>18 Aug 2022</div>
          <div className="pl-[13px]">12:22 AM</div>
        </div>
      </div>
    </div>
  );
}

function CommandRow() {
  const btn = 'flex h-[28px] w-[26px] items-center justify-center border-2 border-t-[#ffffee] border-l-[#ffffee] border-b-[#a8a88c] border-r-[#a8a88c] bg-[#ffffcc]';
  return (
    <div className="flex h-[33px] shrink-0 bg-[#ffffcc]">
      <div className="flex w-[32px] items-center justify-center border-r border-black">
        <div className={btn}><svg width="20" height="22" viewBox="0 0 20 22" fill="none" stroke="#000">{box(0.5, 1.500, 18, 19, 1)}<path d="M4 5l11 12M4 9V5h4M15 13v4h-4" /></svg></div>
      </div>
      <div className="flex w-[32px] items-center justify-center">
        <div className={btn}><svg width="20" height="22" viewBox="0 0 20 22" fill="none" stroke="#000">{box(0.5, 1.500, 18, 19, 1)}<path d="M3 17L15 4M5 17h11M5 5v5h4M11 12v4h4v-4z" /></svg></div>
      </div>
      <div className="flex w-[29px] items-center justify-center bg-[#63c4ae]">
        <div className={btn}><svg width="18" height="22" viewBox="0 0 18 22" fill="none" stroke="#000">{box(1.500, 1.500, 15, 18, 1)}<path d="M7 5h7v12H4V9zM4 11h10M9 5v12" /></svg></div>
      </div>
      <div className={`${MONO} flex w-[49px] items-center border-r border-[#63c4ae] pl-[4px] text-[12px] whitespace-pre`}>X Y :</div>
      <div className="flex w-[173px] items-center border-x border-black px-px">
        <div className="h-[27px] w-[168px] border-2 border-t-[#8c8c72] border-l-[#8c8c72] border-b-[#c8c8a4] border-r-[#c8c8a4] pt-[2px] pl-[4px]">
          <div className="h-[16px] w-[3px] border-l border-dotted border-black" />
        </div>
      </div>
      <div className="flex w-[31px] items-center justify-center bg-[#63c4ae]">
        <div className={btn}><svg width="16" height="20" viewBox="0 0 16 20">{box(0.5, 0.5, 15, 18, 1)}<path d="M7 4h2.500v8H7zM7 14h2.500v2.500H7z" /></svg></div>
      </div>
      <div className={`${MONO} flex grow items-center border-l border-black pl-[3px] text-[12px] tracking-[-0.2px] whitespace-pre`}>{'<M1> - Select first area corner'}</div>
      <div className="flex w-[73px] items-center border-l-2 border-black bg-[#55cdae] pl-[6px]">
        <div className="flex h-[27px] w-[80px] shrink-0 items-center border-2 border-t-[#a8ecd8] border-l-[#a8ecd8] border-b-[#2f6b5f] border-r-[#2f6b5f] pl-[4px]">
          <span className={`${MONO} w-[44px] pt-[2px] text-[15px]`}>Inch</span>
          <div className="h-[8px] w-[12px] border-2 border-t-[#a8ecd8] border-l-[#a8ecd8] border-b-[#2f6b5f] border-r-[#2f6b5f]" />
        </div>
      </div>
    </div>
  );
}

const taskIcons: ReactNode[] = [
  <><path d="M16 30C13 28 9 28 8 27 2 21 -1 14 1 10 6 1 25 0 30 9c3 6-1 14-7 18-3 1-5 2-7 3z" fill="#ffd078" /><path d="M14 28L3 12M15 28L8 5M16 28V3M17 28l6-24M18 28L29 9" stroke="#d9913a" fill="none" /><path d="M21 9l3 7 7 1-6 5 2 8-6-4-6 4 2-8-5-5 7-1z" fill="#f07a18" stroke="#c85808" /></>,
  <><rect x="4" y="2" width="24" height="28" rx="1" fill="#eef8fd" /><path d="M6 6h20M6 10h20M6 14h20M6 18h20M6 22h20M6 26h20" stroke="#4aa0c8" strokeWidth="1.800" /></>,
  <><rect x="1" y="0" width="30" height="32" fill="#2233c0" /><rect x="9" y="0" width="15" height="11" fill="#dde" /><rect x="18" y="2" width="4" height="8" fill="#2233c0" /><rect x="5" y="15" width="23" height="16" fill="#fff" /><path d="M7 19h19M7 23h10M7 27h8" stroke="#c33" strokeWidth="1.500" /><text x="17" y="30" fontSize="9" fontWeight="bold" fontFamily="Liberation Sans">64</text></>,
  <path d="M29 1c-2 3-4 4-9 4C6 6 2 14 3 21c1 7 4 9 11 9 9 0 13-4 13-11l2-5H16l-2 5h7c-1 5-3 7-7 7-4 0-6-2-5-7 1-6 5-9 12-9 4 0 7-1 8-9z" fill="#d62414" />,
  <><path d="M6 9V1h17v6" fill="none" stroke="#0a7a35" strokeWidth="2" /><path d="M8 30V10h9c16 0 15 15-1 14v6z" fill="#129245" /><path d="M13 15c7-2 7 5 1 4z" fill="#234" /><path d="M1 12v18h3" stroke="#0a7a35" fill="none" /></>,
  <><rect x="2" y="1" width="28" height="30" rx="6" fill="#1490ff" /><path d="M10 5c1 5 12 6 13 13 0 3-3 4-4 5l-1 5c-2-2-2-3-2-5-3-1-4-3-4-5-2-1-2-3-1-4-1-2-2-5-1-9z" fill="#fff" /></>,
  <><path d="M3 3h17v26H3z" fill="#3059a8" /><path d="M12 4l17-1v27l-17-4z" fill="#f0f4fc" stroke="#98acd0" /><path d="M15 18h12M15 22h12M15 26h10M20 8h7M20 12h7" stroke="#6887c0" /><text x="3" y="22" fontSize="16" fontWeight="bold" fill="#fff" stroke="#1d4894" strokeWidth="0.6" fontFamily="Liberation Serif">W</text></>,
  <><path d="M2 3h18v26H2z" fill="#2d7c28" /><path d="M12 5l17 2v24l-17-2z" fill="#eaf4e4" stroke="#8fb886" /><path d="M15 12h12M15 18h12M15 24h12M19 8v20M24 8v20" stroke="#5d9e50" /><text x="3" y="23" fontSize="18" fontWeight="bold" fill="#fff" stroke="#1f641b" strokeWidth="0.6" fontFamily="Liberation Sans">X</text></>,
];

function EyeIcon() {
  return (
    <>
      <path d="M0 7l6-5 8 3-6 4z" fill="#35c4b8" />
      <ellipse cx="17" cy="18" rx="14" ry="10" fill="#1d8f88" stroke="#b8d0d0" strokeWidth="1.500" strokeDasharray="3 2" />
      <path d="M3 13c6-6 20-7 27 1" stroke="#123" strokeWidth="2" fill="none" />
      <ellipse cx="18" cy="17" rx="8" ry="6" fill="#2fd0c0" stroke="#064" />
      <circle cx="18" cy="16" r="3" fill="#f5e020" />
      <path d="M4 22c8 8 18 9 26 0" stroke="#111" strokeWidth="2.500" fill="none" />
    </>
  );
}

function Taskbar() {
  const icons = [...taskIcons, <EyeIcon />, <path d="M3 2h7l7 11L27 2h3L19 16l11 14h-8l-7-11L4 30H1l12-14z" fill="#7a1080" stroke="#fff" />, <EyeIcon />];
  return (
    <div className="flex h-[40px] shrink-0 border-t border-[#5e7ba5] bg-[linear-gradient(180deg,#2b4b7d_0%,#0f2c56_30%,#0b254c_100%)]">
      <div className="flex w-[60px] items-center pl-[8px]">
        <svg width="38" height="38" viewBox="0 0 38 38">
          <defs><radialGradient id="orb" cy="85%"><stop offset="0" stopColor="#55c8e8" /><stop offset="0.6" stopColor="#1d5f94" /><stop offset="1" stopColor="#3a5f86" /></radialGradient></defs>
          <circle cx="19" cy="19" r="17.500" fill="url(#orb)" stroke="#9cc3da" />
          <path d="M10 11c3-2 5-2 8 0l-1 7c-3-2-5-2-8 0z" fill="#ef5a24" />
          <path d="M19 11c3 2 5 2 9 0l-2 7c-3 2-5 2-8 0z" fill="#8cc63e" />
          <path d="M9 20c3-2 5-2 8 0l-1 7c-3-2-5-2-8 0z" fill="#2f9ae0" />
          <path d="M18 20c3 2 5 2 8 0l-2 7c-3 2-5 2-8 0z" fill="#fdc62a" />
        </svg>
      </div>
      <div className="flex grow">
        {icons.map((icon, i) => {
          const stacked = i === 7 || i === 9;
          return (
            <div key={i} className="flex w-[62px] shrink-0 gap-px">
              <div
                className={`flex h-[38px] items-center justify-center rounded-[3px] border ${stacked ? 'w-[52px]' : 'w-[58px]'} ${i === 9 ? 'border-[#d5dde8] bg-[linear-gradient(135deg,#c9d1df,#8290ac_60%,#a6b2c8)]' : 'border-[#8296b5] bg-[linear-gradient(135deg,#7d8fae_0%,#4c648c_45%,#21406f_50%,#2c4c7d_100%)]'}`}
              >
                <svg width="32" height="32" viewBox="0 0 32 32">{icon}</svg>
              </div>
              {stacked && <div className="h-[38px] w-[3px] rounded-r-[3px] border border-l-0 border-[#8296b5] bg-[#5d7398]" />}
              {i === 9 && <div className="h-[38px] w-[3px] rounded-r-[3px] border border-l-0 border-[#8296b5] bg-[#5d7398]" />}
            </div>
          );
        })}
      </div>
      <svg width="160" height="39" viewBox="0 0 160 39" className="shrink-0">
        <rect x="1" y="16" width="14" height="8" fill="#d8dde2" /><path d="M2 18h12M2 20.500h12M4 22.500h8M4 14c2-4 6 0 10-4" stroke="#666f7a" fill="none" />
        <circle cx="31" cy="17" r="7.500" fill="#2433b8" stroke="#c6cfe8" /><text x="27.500" y="22" fontSize="13" fontWeight="bold" fill="#fff" fontFamily="Liberation Sans">?</text>
        <path d="M50.500 11.500h5v-3h-4M49.500 10.500h5v3h-5z" fill="none" stroke="#fff" /><path d="M50 22h5l-2.500 3z" fill="#fff" />
        <path d="M68 22h7l-3.500-4z" fill="#fff" />
        <path d="M89 14v14" stroke="#fff" strokeWidth="1.500" /><path d="M91 14c3-1 4 2 8 0v8c-4 2-5-1-8 0z" fill="#fff" /><circle cx="99" cy="23" r="4.500" fill="#d8281c" /><path d="M97 21l4 4M101 21l-4 4" stroke="#fff" strokeWidth="1.500" />
        <path d="M113 18h3l4-4v14l-4-4h-3z" fill="#fff" /><path d="M122 18q2 3 0 6M124.500 16q3 5 0 10" stroke="#fff" fill="none" />
        <rect x="141" y="16" width="10" height="8" fill="#223" stroke="#fff" strokeWidth="1.500" /><path d="M137 14v4h3v-4M138.500 18v9h4M143 27h8" stroke="#fff" fill="none" strokeWidth="1.500" />
      </svg>
      <div className={`${UI} w-[74px] shrink-0 pt-[2px] text-center text-[12.300px] leading-[18px] text-white`}>
        <div>1:01</div>
        <div>2022/8/18</div>
      </div>
      <div className="ml-[1px] w-[13px] shrink-0 border border-[#7f93b0] bg-[linear-gradient(135deg,#6c7f9e,#1c345c_60%)]" />
    </div>
  );
}

export default function App() {
  return (
    <div className="relative flex h-[1080px] w-[1920px] flex-col overflow-hidden bg-black text-black">
      <TitleBar />
      <div className="flex h-[1010px] shrink-0">
        <div className="w-[9px] shrink-0 border-r border-[#3d4a5c] bg-[linear-gradient(180deg,#cfe0f4_0%,#5d7fae_8%,#8faad0_30%,#5a78a4_48%,#b33348_52%,#5fa890_62%,#50607c_70%,#5a7294_90%,#c5d6ee_100%)]" />
        <div className="flex w-[1911px] flex-col">
          <MenuBar />
          <div className="flex h-[887px] shrink-0">
            <Sidebar />
            <Board />
            <RightPanel />
          </div>
          <div className="h-[2px] shrink-0 bg-black" />
          <CommandRow />
          <div className="mt-px h-[31px] border-t-2 border-b-2 border-t-[#7e9090] border-b-[#e8ffff] bg-black pt-px pb-px pl-px">
            <div className={`${MONO} h-[26px] border-t-2 border-b-2 border-t-[#dcffff] border-b-[#629494] bg-[#b3ffff] text-center text-[12px] leading-[22px] tracking-[-0.2px]`}>
              <span className="mr-[12px]">{'ts -> ts1 : 0.0039483'}</span>
            </div>
          </div>
        </div>
      </div>
      <Taskbar />

      <Popview
        title="Popview - 2"
        place="left-[514px] top-[246px] w-[392px]"
        view="w-[341px]"
        bar="bg-[linear-gradient(100deg,#6e6e6e_0%,#60656a_25%,#0c1016_45%,#101317_60%,#4a4c4e_85%,#333_100%)]"
        closeTone="border-[#e8c0b8] bg-[linear-gradient(180deg,#d99a8e_0%,#c8584a_45%,#a81c10_50%,#c04028_100%)]"
      >
        <svg width="333" height="239" viewBox="75 116 1000 718" preserveAspectRatio="none" shapeRendering="crispEdges">
          <rect x="75" y="116" width="1000" height="718" fill={RED} />
          <path d="M75 207h588v-91h123v118H75zM75 472h55l2 5h201v108H120V492H75zM120 602h213v121h231V477h45v294H286V729H165l-10 18 14 36h110l24 9h432v42H120v-36H75V705h45z" />
          <path d="M75 255h1000v201H75zM354 477h189v228H354zM75 504h24v180H75zM75 819h24v15H75z" fill={GOLD} />
        </svg>
      </Popview>

      <Popview
        title="Popview - 1"
        place="left-[1362px] top-[391px] w-[453px]"
        view="w-[402px]"
        bar="bg-[linear-gradient(95deg,#3c3c3e_0%,#36383a_22%,#07080a_45%,#111214_65%,#2b2c30_85%,#78809a_95%,#60646c_100%)]"
        closeTone="border-[#9aa4bc] bg-[linear-gradient(90deg,#5c6480,#5a5ce0_35%,#8089a8_60%,#7c86a0)]"
      >
        <svg width="394" height="239" viewBox="69 131 1183 719" preserveAspectRatio="none" shapeRendering="crispEdges">
          <rect x="69" y="131" width="1183" height="719" fill={RED} />
          <path d="M69 131h1183v229H924l-18-6H324l-18 6H69zM324 421h582v429H324z" fill={GOLD} />
          <path d="M69 423h192v327H69zM69 810h192v40H69zM970 423h143v427H970z" />
        </svg>
      </Popview>
    </div>
  );
}
